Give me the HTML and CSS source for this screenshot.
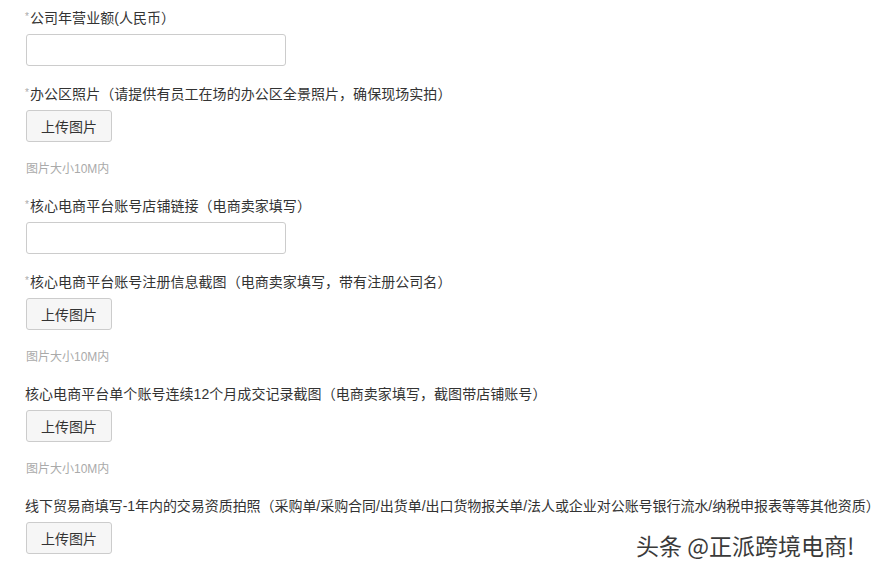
FILE: index.html
```html
<!DOCTYPE html>
<html lang="zh-CN">
<head>
  <meta charset="UTF-8" />
  <meta name="viewport" content="width=device-width, initial-scale=1.0" />
  <title>企业资质信息</title>
  <link rel="stylesheet" href="styles.css">
</head>
<body>
  <div class="form">
    <div class="form-group">
      <label><span class="req">*</span>公司年营业额(人民币）</label>
      <input type="text" class="text-input" />
    </div>
    <div class="form-group">
      <label><span class="req">*</span>办公区照片（请提供有员工在场的办公区全景照片，确保现场实拍）</label>
      <button class="upload-btn">上传图片</button>
      <div class="hint">图片大小10M内</div>
    </div>
    <div class="form-group">
      <label><span class="req">*</span>核心电商平台账号店铺链接（电商卖家填写）</label>
      <input type="text" class="text-input" />
    </div>
    <div class="form-group">
      <label><span class="req">*</span>核心电商平台账号注册信息截图（电商卖家填写，带有注册公司名）</label>
      <button class="upload-btn">上传图片</button>
      <div class="hint">图片大小10M内</div>
    </div>
    <div class="form-group">
      <label>核心电商平台单个账号连续12个月成交记录截图（电商卖家填写，截图带店铺账号）</label>
      <button class="upload-btn">上传图片</button>
      <div class="hint">图片大小10M内</div>
    </div>
    <div class="form-group">
      <label class="long">线下贸易商填写-1年内的交易资质拍照（采购单/采购合同/出货单/出口货物报关单/法人或企业对公账号银行流水/纳税申报表等等其他资质）</label>
      <button class="upload-btn">上传图片</button>
    </div>
  </div>

  <div class="watermark">头条 @正派跨境电商!</div>
</body>
</html>
```

FILE: styles.css
```css
body {
  margin: 0; background: #fff; color: #333;
  font-family: "Liberation Sans", "Noto Sans CJK SC", sans-serif;
  overflow: hidden;
}
.form { padding: 8px 0 0 25px; }
.form-group { margin-bottom: 18px; }
label {
  display: block; font-size: 14px; line-height: 20px;
  margin-bottom: 6px; white-space: nowrap; letter-spacing: 0.05px;
}
label.long { letter-spacing: -0.05px; }
.req {
  color: #aaa; font-size: 10px; vertical-align: top;
  line-height: 17px; margin-right: 1px;
}
.text-input {
  display: block; width: 260px; height: 32px; box-sizing: border-box;
  margin-left: 1px; border: 1px solid #ccc; border-radius: 3px; background: #fff;
}
.upload-btn {
  display: block; width: 86px; height: 32px; margin-left: 1px;
  border: 1px solid #ccc; border-radius: 3px; background: #f6f6f6;
  color: #333; font-family: inherit; font-size: 14px; padding: 0;
}
.hint {
  font-size: 12px; line-height: 16px; color: #aaa;
  margin: 19px 0 0 1px;
}
.form-group:has(.hint) { margin-bottom: 19px; }
.watermark {
  position: absolute; left: 636px; top: 532px;
  font-size: 23px; line-height: 26px; color: #3a3a3a;
  font-family: "Noto Sans CJK SC", sans-serif;
  text-shadow: 1px 1px 0 #fff, -1px -1px 0 #fff, 1px -1px 0 #fff, -1px 1px 0 #fff, 0 0 3px #fff;
}
```
